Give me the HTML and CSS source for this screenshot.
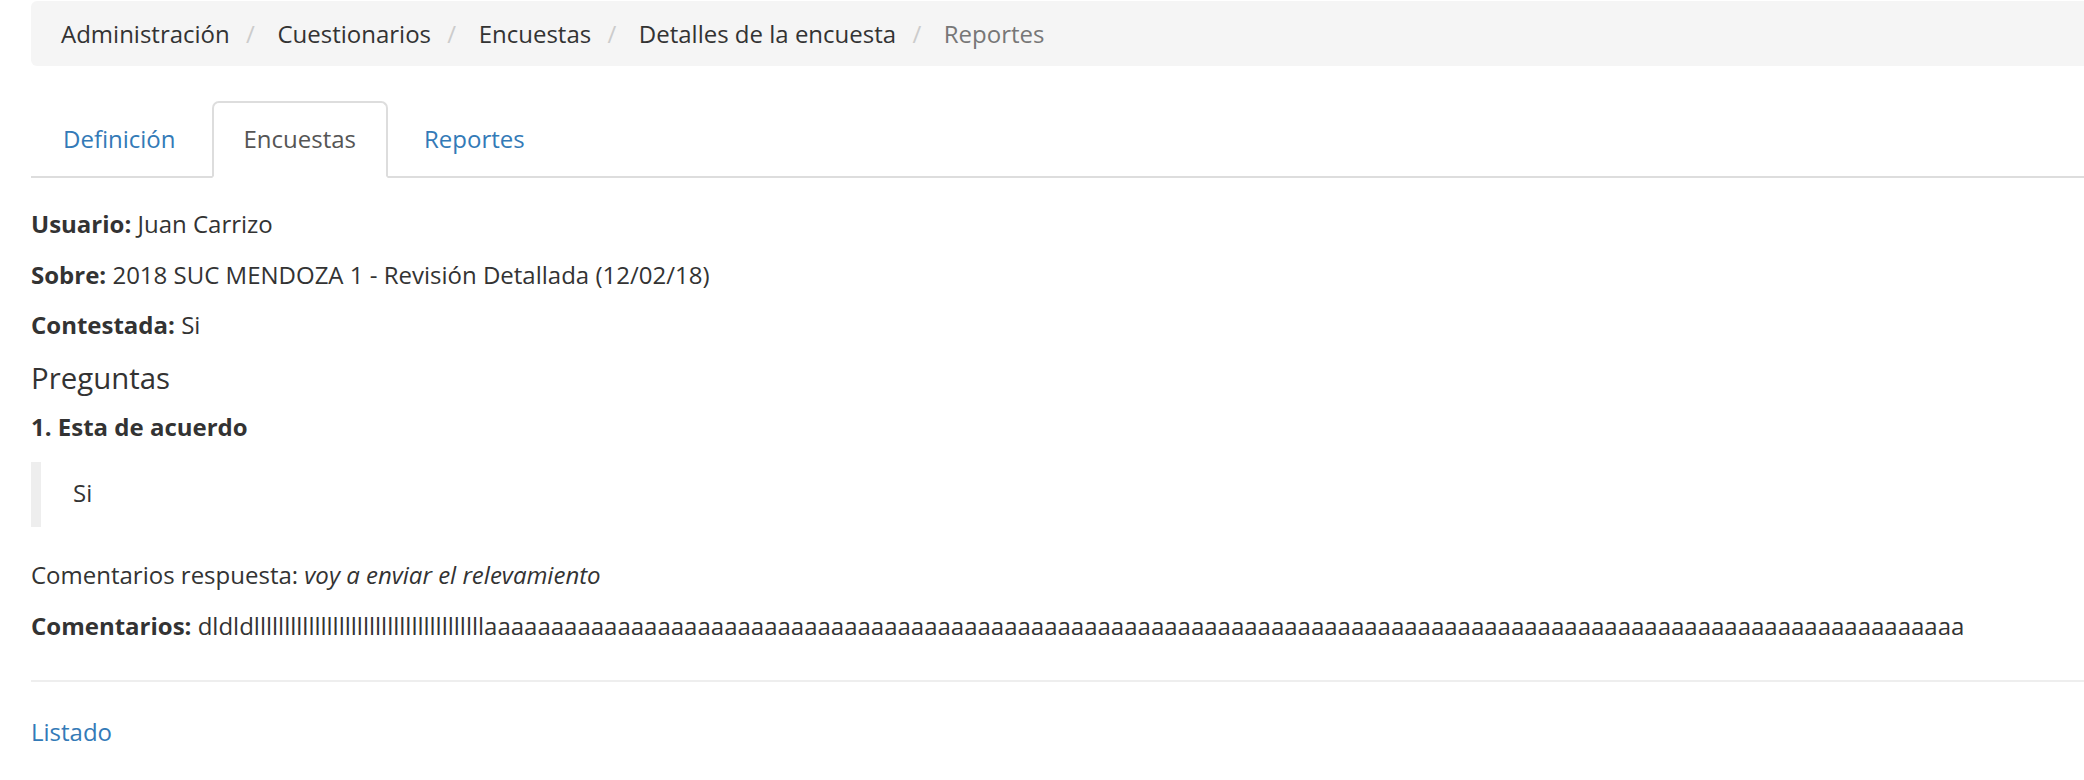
FILE: index.html
```html
<!DOCTYPE html>
<html lang="es">
<head>
<meta charset="utf-8">
<title>Reportes</title>
<link rel="stylesheet" href="styles.css">
</head>
<body>
<div class="page">
  <ol class="breadcrumb">
    <li>Administración</li>
    <li>Cuestionarios</li>
    <li>Encuestas</li>
    <li>Detalles de la encuesta</li>
    <li class="active">Reportes</li>
  </ol>

  <ul class="tabs">
    <li><a href="#">Definición</a></li>
    <li class="active"><a href="#">Encuestas</a></li>
    <li><a href="#">Reportes</a></li>
  </ul>

  <div class="tab-content">
    <p><strong>Usuario:</strong> Juan Carrizo</p>
    <p><strong>Sobre:</strong> 2018 SUC MENDOZA 1 - Revisión Detallada (12/02/18)</p>
    <p><strong>Contestada:</strong> Si</p>

    <h4 class="section-title">Preguntas</h4>
    <p class="question">1. Esta de acuerdo</p>
    <blockquote class="answer">Si</blockquote>

    <p class="comment-answer">Comentarios respuesta: <em>voy a enviar el relevamiento</em></p>
    <p class="comment"><strong>Comentarios:</strong> dldldllllllllllllllllllllllllllllllllllllllaaaaaaaaaaaaaaaaaaaaaaaaaaaaaaaaaaaaaaaaaaaaaaaaaaaaaaaaaaaaaaaaaaaaaaaaaaaaaaaaaaaaaaaaaaaaaaaaaaaaaaaaaaaaaaa</p>

    <hr class="divider">
    <a class="back-link" href="#">Listado</a>
  </div>
</div>
</body>
</html>
```

FILE: styles.css
```css
html, body {
  margin: 0;
  padding: 0;
  background: #ffffff;
  overflow: hidden;
}

body {
  font-family: "Open Sans", "Noto Sans", sans-serif;
  font-size: 24px;
  line-height: 1.42857;
  color: #333333;
}

.page {
  padding: 1px 0 0 31px;
}

/* Breadcrumb */
.breadcrumb {
  display: flex;
  margin: 0 0 35px 0;
  padding: 15.5px 30px;
  list-style: none;
  background: #f5f5f5;
  border-radius: 6px 0 0 6px;
}

.breadcrumb li {
  color: #333333;
  white-space: nowrap;
}

.breadcrumb li + li::before {
  content: "/\00a0";
  padding: 0 16.3px;
  color: #cccccc;
}

.breadcrumb li.active {
  color: #777777;
}

/* Tabs */
.tabs {
  display: flex;
  margin: 0;
  padding: 0;
  list-style: none;
  border-bottom: 2px solid #dddddd;
}

.tabs li {
  margin-bottom: -2px;
  margin-right: 4px;
}

.tabs a {
  display: block;
  padding: 19px 30px;
  border: 2px solid transparent;
  border-radius: 7px 7px 0 0;
  color: #337ab7;
  text-decoration: none;
}

.tabs li.active a {
  color: #555555;
  background: #ffffff;
  border-color: #dddddd #dddddd transparent #dddddd;
}

/* Content */
.tab-content {
  padding-top: 29.5px;
}

.tab-content p {
  margin: 0 0 16.4px 0;
}

strong {
  font-weight: 700;
}

.section-title {
  margin: 19px 0 16.3px 0;
  font-size: 29.4px;
  line-height: 32px;
  font-weight: 400;
}

.tab-content p.question {
  font-weight: 700;
  margin-bottom: 18.2px;
}

.answer {
  margin: 0 0 31.5px 0;
  padding: 13.5px 32px 16.6px 32px;
  border-left: 10px solid #eeeeee;
}

.tab-content p.comment {
  margin-bottom: 0;
  white-space: nowrap;
}

.divider {
  margin: 36.8px 0 33px 0;
  border: 0;
  border-top: 2px solid #eeeeee;
  height: 0;
}

.back-link {
  color: #337ab7;
  text-decoration: none;
}
```
